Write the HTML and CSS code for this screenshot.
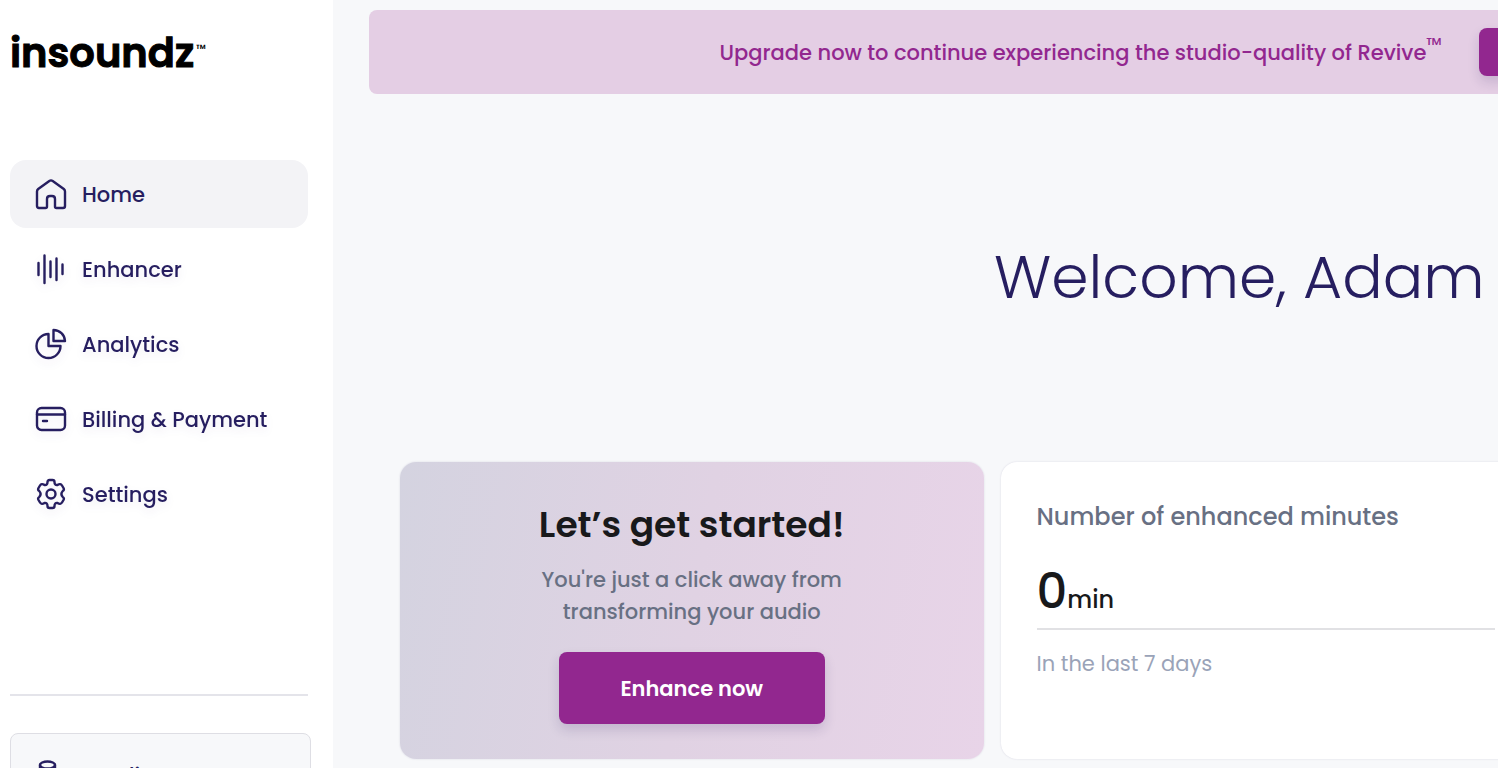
FILE: index.html
```html
<!DOCTYPE html>
<html lang="en">
<head>
    <meta charset="UTF-8">
    <meta name="viewport" content="width=device-width, initial-scale=1.0">
    <title>insoundz</title>
    <link rel="stylesheet" href="styles.css">
</head>
<body>

    <!-- Sidebar -->
    <aside class="sidebar">
        <a href="#" class="logo">insoundz<span class="logo-tm">™</span></a>

        <nav class="menu">
            <a href="#" class="menu-item active">
                <svg class="icon" viewBox="0 0 32 32">
                    <path d="M2 13.5 Q2 12 3.2 11 L14.3 3 Q16 1.8 17.7 3 L28.8 11 Q30 12 30 13.5 V28 Q30 30 28 30 H21.5 Q20 30 20 28.5 V21 Q20 18 17 18 H15 Q12 18 12 21 V28.5 Q12 30 10.5 30 H4 Q2 30 2 28 Z"/>
                </svg>
                <span>Home</span>
            </a>
            <a href="#" class="menu-item">
                <svg class="icon" viewBox="0 0 32 32">
                    <path d="M3.5 10 V22 M9.5 2.5 V30 M15.5 8.5 V24 M21.5 5.5 V27 M27.5 11.5 V21"/>
                </svg>
                <span>Enhancer</span>
            </a>
            <a href="#" class="menu-item">
                <svg class="icon" viewBox="0 0 32 32">
                    <path d="M13.5 6 A12 12 0 1 0 25.5 18 H13.5 Z M18.5 2 A11.5 11.5 0 0 1 30 13 H18.5 Z"/>
                </svg>
                <span>Analytics</span>
            </a>
            <a href="#" class="menu-item">
                <svg class="icon" viewBox="0 0 32 32">
                    <rect x="2" y="5" width="28" height="22" rx="4.5"/>
                    <path d="M2 11.5 H30 M8 18 H12"/>
                </svg>
                <span>Billing &amp; Payment</span>
            </a>
            <a href="#" class="menu-item">
                <svg class="icon" viewBox="0 0 32 32">
                    <circle cx="16" cy="16" r="4.5"/>
                    <path d="M12.5 4 Q12.5 2 14.5 2 H17.5 Q19.5 2 19.5 4 Q19.5 7.5 22.5 7 Q25.5 5 27 7.5 L28.5 10 Q29.5 12 27.8 13 Q25 16 27.8 19 Q29.5 20 28.5 22 L27 24.5 Q25.5 27 22.5 25 Q19.5 24.5 19.5 28 Q19.5 30 17.5 30 H14.5 Q12.5 30 12.5 28 Q12.5 24.5 9.5 25 Q6.5 27 5 24.5 L3.5 22 Q2.5 20 4.2 19 Q7 16 4.2 13 Q2.5 12 3.5 10 L5 7.5 Q6.5 5 9.5 7 Q12.5 7.5 12.5 4 Z"/>
                </svg>
                <span>Settings</span>
            </a>
        </nav>

        <div class="credits">
            <svg class="icon" viewBox="0 0 32 32">
                <ellipse cx="11.5" cy="6" rx="7.5" ry="3.5"/>
                <path d="M4 6 V26 Q4 30 11.5 30 Q19 30 19 26 V6"/>
            </svg>
            <span>Credits</span>
        </div>
    </aside>

    <!-- Main content -->
    <main class="main">
        <div class="banner">
            <span>Upgrade now to continue experiencing the studio-quality of Revive<sup>™</sup></span>
            <button class="btn banner-btn" aria-label="Upgrade"></button>
        </div>

        <h1>Welcome, Adam</h1>

        <div class="cards">
            <section class="card start-card">
                <h2>Let’s get started!</h2>
                <p>You're just a click away from transforming your audio</p>
                <button class="btn">Enhance now</button>
            </section>
            <section class="card">
                <h3>Number of enhanced minutes</h3>
                <div class="amount">0<span>min</span></div>
                <p class="period">In the last 7 days</p>
            </section>
        </div>
    </main>

</body>
</html>
```
FILE: styles.css
```css
* {
    box-sizing: border-box;
}

body {
    font-family: Poppins, Inter, sans-serif;
    font-size: 21px;
    display: flex;
    height: 100vh;
    margin: 0;
    overflow: hidden;
    color: #261e60;
    background-color: #f7f8fa;
}

h1, h2, h3, p {
    margin: 0;
}

/* Sidebar */
.sidebar {
    flex: none;
    width: 333px;
    padding: 24px 22px 0 10px;
    background: #fff;
}

.logo {
    display: flex;
    align-items: flex-start;
    gap: 2px;
    font-size: 40px;
    font-weight: 600;
    line-height: 58px;
    color: #000;
    text-decoration: none;
    -webkit-text-stroke: 1px #000;
}

.logo-tm {
    font-size: 12px;
    font-weight: 500;
    line-height: 50px;
    -webkit-text-stroke: 0;
}

.menu {
    display: flex;
    flex-direction: column;
    gap: 7px;
    margin-right: 3px;
    padding: 78px 0 166px;
    border-bottom: 2px solid #e4e4ea;
}

.menu-item {
    display: flex;
    align-items: center;
    gap: 15px;
    height: 68px;
    padding: 0 25px;
    border-radius: 16px;
    font-weight: 500;
    color: #261e60;
    text-decoration: none;
    filter: drop-shadow(0 4px 4px rgba(38, 30, 96, 0.08));
}

.menu-item.active {
    background: #f3f3f6;
    filter: none;
}

.icon {
    flex: none;
    width: 32px;
    height: 32px;
    fill: none;
    stroke: #261e60;
    stroke-width: 2.4;
    stroke-linecap: round;
    stroke-linejoin: round;
}

.credits {
    display: flex;
    gap: 15px;
    margin-top: 37px;
    padding: 25px;
    height: 120px;
    border: 1px solid #dedee4;
    border-radius: 8px;
    font-weight: 500;
    line-height: 34px;
    background: #f7f8fa;
}

/* Main content, runs past the right edge of the window */
.main {
    flex: none;
    width: 121vw;
    padding: 10px 36px;
}

.banner {
    display: flex;
    align-items: center;
    justify-content: center;
    gap: 37px;
    height: 84px;
    border-radius: 8px;
    color: #92278f;
    background: #e4cee4;
    font-weight: 500;
}

.banner sup {
    font-size: 20px;
    font-weight: 400;
    line-height: 0;
}

.btn {
    width: 266px;
    height: 72px;
    border: none;
    border-radius: 8px;
    font-family: inherit;
    font-size: 21px;
    font-weight: 600;
    color: #fff;
    background: #92278f;
    box-shadow: 0 6px 12px rgba(38, 30, 96, 0.15);
}

.banner-btn {
    width: 280px;
    height: 48px;
}

h1 {
    padding: 140px 0 142px;
    font-size: 60px;
    font-weight: 300;
    line-height: 86px;
    text-align: center;
}

.cards {
    display: grid;
    grid-template-columns: 1.1fr 1fr 1fr;
    gap: 17px;
    padding: 0 31px;
}

.card {
    min-height: 297px;
    padding: 36px;
    border-radius: 16px;
    background: #fff;
    box-shadow: 0 0 2px rgba(38, 30, 96, 0.15);
}

.start-card {
    display: flex;
    flex-direction: column;
    align-items: center;
    padding-bottom: 35px;
    text-align: center;
    background: linear-gradient(100deg, #d4d3e0, #e0d2e3 50%, #e8d4e8);
}

.start-card h2 {
    font-size: 36px;
    font-weight: 600;
    line-height: 54px;
    color: #18191b;
}

.start-card p {
    width: 330px;
    margin: 12px 0 24px;
    font-weight: 500;
    line-height: 32px;
    color: #687083;
}

.card h3 {
    font-size: 24px;
    font-weight: 500;
    line-height: 38px;
    color: #687083;
}

.amount {
    padding: 26px 0 6px;
    border-bottom: 2px solid #e1e1e4;
    font-size: 48px;
    font-weight: 500;
    line-height: 60px;
    color: #18191b;
}

.amount span {
    font-size: 24px;
    line-height: 24px;
}

.period {
    padding-top: 18px;
    line-height: 32px;
    color: #9aa3b8;
}
```
